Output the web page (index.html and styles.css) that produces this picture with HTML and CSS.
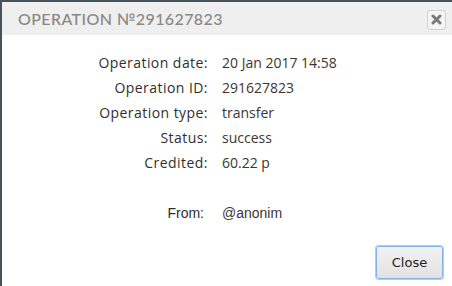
FILE: index.html
```html
<!DOCTYPE html>
<html>
<head>
<meta charset="utf-8">
<link rel="stylesheet" href="styles.css">
</head>
<body>
<div class="dialog">
  <div class="header">
    <div class="title">OPERATION №291627823</div>
    <button class="x-btn" aria-label="close">
      <svg width="11" height="11" viewBox="0 0 11 11"><path d="M2 2 L9 9 M9 2 L2 9" stroke="#7a7a7a" stroke-width="3" stroke-linecap="round"/></svg>
    </button>
  </div>
  <div class="content">
    <div class="grid">
      <div class="label">Operation date:</div><div class="value">20 Jan 2017 14:58</div>
      <div class="label">Operation ID:</div><div class="value">291627823</div>
      <div class="label">Operation type:</div><div class="value">transfer</div>
      <div class="label">Status:</div><div class="value">success</div>
      <div class="label">Credited:</div><div class="value">60.22 p</div>
      <div class="label"></div><div class="value"></div>
      <div class="label alt">From:</div><div class="value alt">@anonim</div>
    </div>
  </div>
  <div class="footer">
    <button class="close-btn">Close</button>
  </div>
</div>
</body>
</html>
```

FILE: styles.css
```css
html, body {
  margin: 0;
  padding: 0;
  height: 100%;
  overflow: hidden;
  background: #47535c;
}
body {
  padding: 2px 0 0 2px;
  box-sizing: border-box;
}
.dialog {
  background: #fff;
  height: 100%;
  display: flex;
  flex-direction: column;
  font-family: "Open Sans", sans-serif;
}
.header {
  background: #efefef;
  height: 33px;
  display: flex;
  align-items: center;
  justify-content: space-between;
  padding: 0 6px 0 16px;
}
.title {
  font-family: "Lato", sans-serif;
  font-size: 16px;
  letter-spacing: 0.4px;
  color: #8a8783;
  font-weight: 500;
}
.x-btn {
  width: 19px;
  height: 20px;
  padding: 0;
  border: 1px solid #d2d2d2;
  border-radius: 3px;
  background: #f4f4f4;
  display: flex;
  align-items: center;
  justify-content: center;
  margin-top: 2px;
}
.content {
  flex: 1;
  padding-top: 15px;
}
.grid {
  display: grid;
  grid-template-columns: 206px auto;
  column-gap: 14px;
  grid-auto-rows: 25px;
  font-size: 14px;
  align-items: center;
}
.label {
  text-align: right;
  color: #2f2f2f;
  letter-spacing: 0.45px;
}
.value {
  color: #3b3632;
}
.alt {
  font-family: "Liberation Sans", sans-serif;
  letter-spacing: 0;
}
.label.alt {
  padding-right: 4px;
}
.footer {
  display: flex;
  justify-content: flex-end;
  padding: 0 9px 7px 0;
}
.close-btn {
  width: 67px;
  height: 33px;
  font-family: "DejaVu Sans", sans-serif;
  font-size: 13px;
  color: #222;
  border: 1px solid #7fb3ea;
  border-radius: 3px;
  background: linear-gradient(#f2f2f2, #e2e2e2);
  box-shadow: 0 0 0 1px #a9cdf3;
}
```
